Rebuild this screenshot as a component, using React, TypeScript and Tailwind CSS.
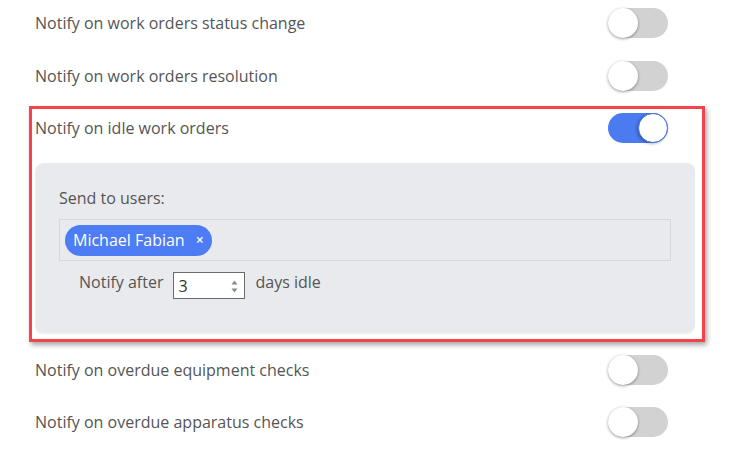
import React from "react";

function Toggle({ on }: { on?: boolean }) {
  return on ? (
    <div className="relative w-[60px] h-[30px] rounded-full bg-[#4b7bf0] shrink-0">
      <div className="absolute right-0 top-0 w-[30px] h-[30px] rounded-full bg-white border border-[#3f6fd9] shadow-[-1px_1px_3px_rgba(0,0,0,0.3)]" />
    </div>
  ) : (
    <div className="relative w-[60px] h-[30px] rounded-full bg-[#d2d2d2] shrink-0">
      <div className="absolute left-0 top-0 w-[30px] h-[30px] rounded-full bg-white shadow-[0_1px_3px_rgba(0,0,0,0.4)]" />
    </div>
  );
}

function Row({ label, cls }: { label: string; cls: string }) {
  return (
    <div className={`flex items-center pl-[35px] pr-[64px] h-[47px] ${cls}`}>
      <span>{label}</span>
      <div className="ml-auto">
        <Toggle />
      </div>
    </div>
  );
}

export default function App() {
  return (
    <div
      className="w-[732px] h-[454px] bg-white text-[16px] leading-[24px] text-[#555555] overflow-hidden"
      style={{ fontFamily: '"Open Sans", "Noto Sans", sans-serif' }}
    >
      <div className="flex items-center pl-[35px] pr-[64px] h-[46px]">
        <span>Notify on work orders status change</span>
        <div className="ml-auto">
          <Toggle />
        </div>
      </div>
      <Row label="Notify on work orders resolution" cls="mt-[6px]" />

      <div className="ml-[29px] mt-[7px] w-[676px] border-[3px] border-[#f4434a] shadow-[2px_3px_5px_rgba(0,0,0,0.35)] pb-[6px]">
        <div className="flex items-center pl-[3px] pr-[34px] h-[37px]">
          <span>Notify on idle work orders</span>
          <div className="ml-auto">
            <Toggle on />
          </div>
        </div>
        <div className="ml-[4px] mr-[7px] mt-[17px] h-[170px] rounded-[8px] bg-[#e9eaee] pl-[23px] pr-[24px] pt-[23px] shadow-[-1px_1px_2px_rgba(0,0,0,0.08)]">
          <div className="mb-[9px]">Send to users:</div>
          <div className="h-[42px] border border-[#d6d7dd] flex items-center pl-[5px]">
            <div className="h-[31px] rounded-full bg-[#4d7cf4] text-white flex items-center pl-[8px] pr-[8px]">
              <span>Michael Fabian</span>
              <span className="ml-[11px] text-[14px] leading-none font-semibold">×</span>
            </div>
          </div>
          <div className="mt-[11px] pl-[20px] flex items-start">
            <span className="-mt-[2px]">Notify after</span>
            <div className="ml-[10px] relative w-[72px] h-[27px] bg-white border border-[#6b6b6b] flex items-center pl-[4px] text-[#333]">
              <span>3</span>
              <svg
                className="absolute right-[6px] top-[7px]"
                width="7"
                height="13"
                viewBox="0 0 7 13"
              >
                <path d="M3.5 0.5 L6.5 4.5 L0.5 4.5 Z" fill="#8a8a8a" />
                <path d="M0.5 8.5 L6.5 8.5 L3.5 12.5 Z" fill="#8a8a8a" />
              </svg>
            </div>
            <span className="ml-[10px] -mt-[2px]">days idle</span>
          </div>
        </div>
      </div>

      <Row label="Notify on overdue equipment checks" cls="mt-[4px]" />
      <Row label="Notify on overdue apparatus checks" cls="mt-[5px]" />
    </div>
  );
}
